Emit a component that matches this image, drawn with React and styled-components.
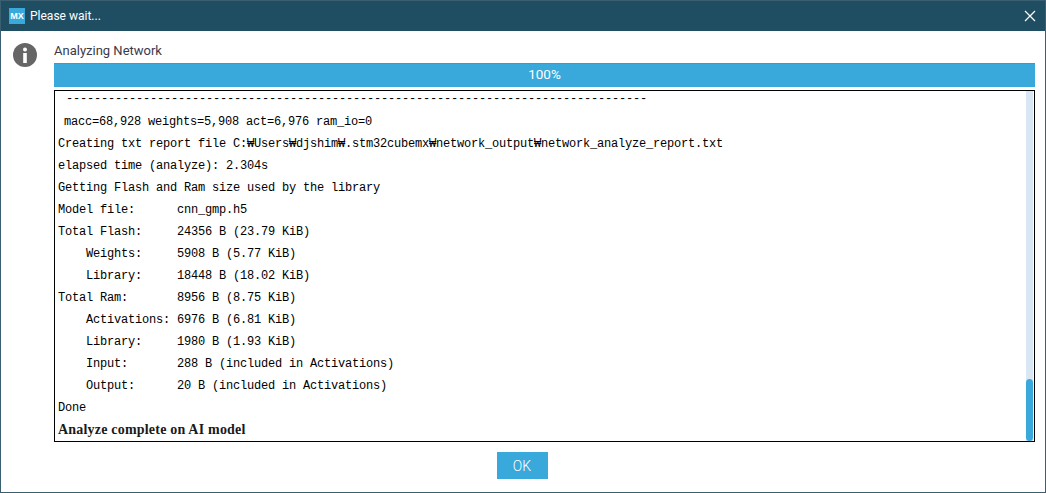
import React from 'react';
import styled, { createGlobalStyle } from 'styled-components';

const REPORT = [
    { label: 'Model file:', value: 'cnn_gmp.h5' },
    { label: 'Total Flash:', value: '24356 B (23.79 KiB)' },
    { label: 'Weights:', value: '5908 B (5.77 KiB)', indent: true },
    { label: 'Library:', value: '18448 B (18.02 KiB)', indent: true },
    { label: 'Total Ram:', value: '8956 B (8.75 KiB)' },
    { label: 'Activations:', value: '6976 B (6.81 KiB)', indent: true },
    { label: 'Library:', value: '1980 B (1.93 KiB)', indent: true },
    { label: 'Input:', value: '288 B (included in Activations)', indent: true },
    { label: 'Output:', value: '20 B (included in Activations)', indent: true },
];

export default function App() {
    return <>
        <GlobalStyle />
        <Window>
            <TitleBar>
                <AppBadge>MX</AppBadge>
                <Title>Please wait...</Title>
                <CloseIcon viewBox='0 0 12 12'>
                    <path d='M1 1L11 11M11 1L1 11' />
                </CloseIcon>
            </TitleBar>
            <Body>
                <Content>
                    <InfoIcon viewBox='0 0 24 24'>
                        <circle cx='12' cy='12' r='12' fill='#666666' />
                        <circle cx='12' cy='6.4' r='2' fill='#ffffff' />
                        <rect x='10.2' y='10' width='3.6' height='10' fill='#ffffff' />
                    </InfoIcon>
                    <Main>
                        <TaskLabel>Analyzing Network</TaskLabel>
                        <Progress>100%</Progress>
                        <LogBox>
                            <LogContent>
                                <Rule>{'-'.repeat(83)}</Rule>
                                <Summary>macc=68,928 weights=5,908 act=6,976 ram_io=0</Summary>
                                <LogLine>Creating txt report file C:₩Users₩djshim₩.stm32cubemx₩network_output₩network_analyze_report.txt</LogLine>
                                <LogLine>elapsed time (analyze): 2.304s</LogLine>
                                <LogLine>Getting Flash and Ram size used by the library</LogLine>
                                {REPORT.map(row => (
                                    <ReportRow key={row.label + row.value}>
                                        <ReportLabel $indent={row.indent}>{row.label}</ReportLabel>
                                        <span>{row.value}</span>
                                    </ReportRow>
                                ))}
                                <LogLine>Done</LogLine>
                                <BoldLine>Analyze complete on AI model</BoldLine>
                            </LogContent>
                            <ScrollTrack>
                                <ScrollThumb />
                            </ScrollTrack>
                        </LogBox>
                    </Main>
                </Content>
                <Footer>
                    <OkButton>OK</OkButton>
                </Footer>
            </Body>
        </Window>
    </>;
}

const GlobalStyle = createGlobalStyle`
    html, body {
        margin: 0;
        padding: 0;
        background: #ffffff;
    }
`;

const Window = styled.div`
    box-sizing: border-box;
    display: flex;
    flex-direction: column;
    width: 1046px;
    height: 493px;
    overflow: hidden;
    border: 1px solid #3a5f70;
    background: #ffffff;
    font-family: Roboto, "Open Sans", sans-serif;
`;

const TitleBar = styled.div`
    display: flex;
    align-items: center;
    flex: none;
    height: 30px;
    padding: 0 9px 0 8px;
    background: #1f4e63;
`;

const AppBadge = styled.div`
    display: flex;
    align-items: center;
    justify-content: center;
    width: 16px;
    height: 16px;
    margin-right: 5px;
    background: #39a9dc;
    color: #ffffff;
    font-family: "Liberation Sans", sans-serif;
    font-size: 9px;
    font-weight: 700;
`;

const Title = styled.div`
    flex: 1;
    color: #ffffff;
    font-size: 12px;
`;

const CloseIcon = styled.svg`
    width: 12px;
    height: 12px;
    fill: none;
    stroke: #ffffff;
    stroke-width: 1.2;
`;

const Body = styled.div`
    display: flex;
    flex-direction: column;
    flex: 1;
    min-height: 0;
    padding-top: 12px;
`;

const Content = styled.div`
    display: flex;
    padding: 0 10px 0 12px;
`;

const InfoIcon = styled.svg`
    flex: none;
    width: 24px;
    height: 24px;
    margin-right: 17px;
`;

const Main = styled.div`
    display: flex;
    flex-direction: column;
    flex: 1;
    min-width: 0;
`;

const TaskLabel = styled.div`
    height: 20px;
    color: #3a3a4a;
    font-size: 13px;
    line-height: 15px;
`;

const Progress = styled.div`
    box-sizing: border-box;
    height: 24px;
    border-top: 1px solid #4a94c0;
    background: #39a9dc;
    color: #ffffff;
    font-size: 13.5px;
    line-height: 20px;
    text-align: center;
`;

const LogBox = styled.div`
    position: relative;
    box-sizing: border-box;
    height: 352px;
    margin-top: 3px;
    overflow: hidden;
    border: 1px solid #000000;
`;

const LogContent = styled.div`
    display: flex;
    flex-direction: column;
    padding-left: 3px;
    color: #000000;
    font-family: "Liberation Mono", "DejaVu Sans Mono", monospace;
    font-size: 12px;
    letter-spacing: -0.2px;
    white-space: pre;
`;

const LogLine = styled.div`
    height: 22px;
    line-height: 22px;
`;

const Rule = styled(LogLine)`
    height: 20px;
    line-height: 17px;
    padding-left: 8px;
`;

const Summary = styled(LogLine)`
    padding-left: 6px;
`;

const ReportRow = styled(LogLine)`
    display: flex;
`;

const ReportLabel = styled.span`
    box-sizing: border-box;
    width: 119px;
    padding-left: ${props => props.$indent ? '28px' : '0'};
`;

const BoldLine = styled(LogLine)`
    font-family: "Liberation Serif", serif;
    font-size: 14px;
    font-weight: 700;
    letter-spacing: 0.2px;
    color: #1a1a1a;
`;

const ScrollTrack = styled.div`
    position: absolute;
    top: 0;
    right: 1px;
    bottom: 0;
    width: 7px;
    display: flex;
    align-items: flex-end;
    background: #d9e7f5;
`;

const ScrollThumb = styled.div`
    width: 100%;
    height: 62px;
    border-radius: 4px;
    background: #39a9dc;
`;

const Footer = styled.div`
    display: flex;
    justify-content: center;
    padding: 10px 2px 0 0;
`;

const OkButton = styled.button`
    width: 51px;
    height: 27px;
    padding: 0;
    border: none;
    background: #39a9dc;
    color: #ffffff;
    font-family: inherit;
    font-size: 14px;
    font-weight: 300;
`;
